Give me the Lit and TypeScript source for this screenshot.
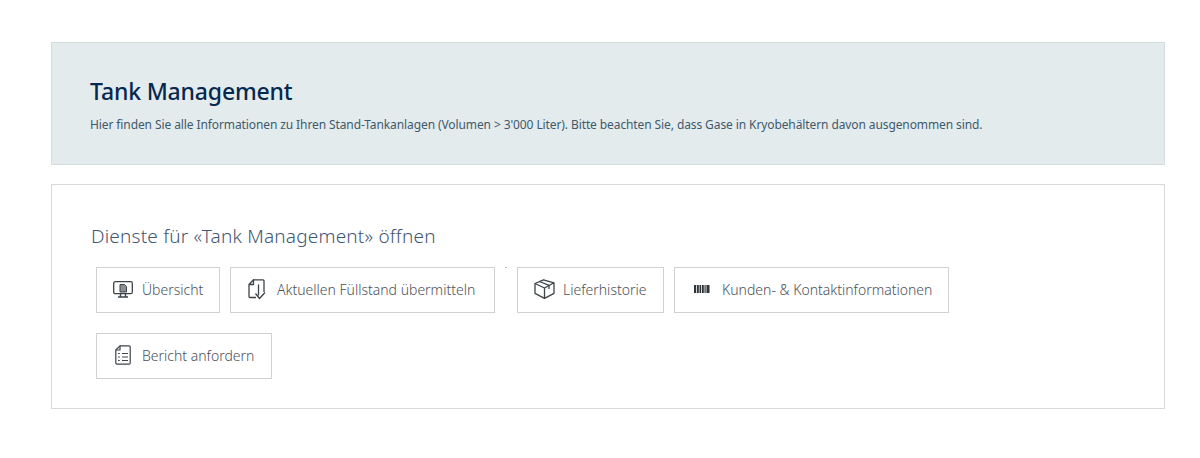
import { LitElement, html, css, svg } from "lit";
import { customElement } from "lit/decorators.js";

const icons: Record<string, unknown> = {
  monitor: svg`<svg class="ic" width="20" height="17" viewBox="0 0 20 17" fill="none" stroke="#3c4448" stroke-width="1.3">
    <rect x="0.7" y="0.7" width="18.6" height="12" rx="1.5"/>
    <path d="M7 11V3.500h4.500L13.500 5.500V11z" fill="#8a9094" stroke-width="1"/>
    <path d="M7.500 12.700v2.800M12.500 12.700v2.800M5 16h10" stroke-width="1.400"/></svg>`,
  upload: svg`<svg class="ic" width="20" height="21" viewBox="0 0 20 21" fill="none" stroke="#3c4448" stroke-width="1.300" stroke-linejoin="round">
    <path d="M5.500 0.800h9.500a1 1 0 0 1 1 1V13"/><path d="M8 18.500H2a1 1 0 0 1-1-1V5.500L5.500 0.800V5.500H1"/>
    <path d="M10.500 5.500V16.500M7.500 14.500l4 5 5.500-6"/></svg>`,
  box: svg`<svg class="ic" width="21" height="20" viewBox="0 0 21 20" fill="none" stroke="#3c4448" stroke-width="1.300" stroke-linejoin="round">
    <path d="M9.500 0.800l10.500 3v10.500l-9.500 5-9.500-5V4.500z"/><path d="M1 4.500l9.500 4.500 9.500-5.200M10.500 9V19.200"/><path d="M5.500 2.500l9.500 3.800v3.700"/></svg>`,
  barcode: svg`<svg class="ic" width="19" height="8" viewBox="0 0 19 8" fill="#2f3438">
    <path d="M0 0h2.200v8H0zM3 0h1.800v8H3zM5.500 0h1.500v8H5.500zM7.800 0h2v8h-2zM10.500 0h1.200v8h-1.200zM12.500 0h3v8h-3z"/></svg>`,
  report: svg`<svg class="ic" width="16" height="20" viewBox="0 0 16 20" fill="none" stroke="#3c4448" stroke-width="1.200" stroke-linejoin="round">
    <path d="M5 0.800h9a1.200 1.200 0 0 1 1.200 1.200v16a1.200 1.200 0 0 1-1.200 1.200H2A1.200 1.200 0 0 1 0.800 18V5z"/><path d="M5 0.800V5H0.800"/>
    <path d="M3 8.500h1.800M3 12h1.800M3 15.500h1.800M7 8.500h6M7 12h6M7 15.500h6"/></svg>`,
};

@customElement("app-root")
export class AppRoot extends LitElement {
  static styles = css`
    :host { display: block; font-family: "Noto Sans", "Open Sans", sans-serif; background: #fff; }
    .page { padding: 42px 35px 49px 51px; display: flex; flex-direction: column; gap: 19px; }
    .banner { background: #e4ebed; border: 1px solid #d5dde1; height: 123px; box-sizing: border-box; padding: 31px 38px 0; }
    h1 { margin: 0; color: #05294e; font-size: 23px; line-height: 34px; font-weight: 500; letter-spacing: -0.17px; }
    .banner p { margin: 8px 0 0; color: #3f5a6c; font-size: 12px; line-height: 18px; letter-spacing: -0.1px; }
    .card { border: 1px solid #d7d9da; height: 225px; box-sizing: border-box; padding: 37px 39px 0; }
    h2 { margin: 0; color: #3f5674; font-size: 19px; font-weight: 300; line-height: 28px; letter-spacing: 0.2px; }
    .btns { display: flex; flex-wrap: wrap; gap: 20px 10px; margin: 17px 0 0 5px; }
    .btn { height: 46px; box-sizing: border-box; padding-bottom: 2px; border: 1px solid #cfd1d2; background: #fff; display: flex; align-items: center; color: #4b5157; font-size: 14px; font-weight: 300; }
    .slot { width: 24px; margin-right: 7px; display: flex; justify-content: center; flex: none; }
    .ic { display: block; }
    .dot { width: 2px; height: 1px; background: #b8bcbe; }
  `;

  private btn(icon: string, label: string, w: number, pad: number) {
    return html`<div class="btn" style="width:${w}px;padding-left:${pad}px"><span class="slot">${icons[icon]}</span>${label}</div>`;
  }

  render() {
    return html`<div class="page">
      <section class="banner">
        <h1>Tank Management</h1>
        <p>Hier finden Sie alle Informationen zu Ihren Stand-Tankanlagen (Volumen &gt; 3'000 Liter). Bitte beachten Sie, dass Gase in Kryobehältern davon ausgenommen sind.</p>
      </section>
      <section class="card">
        <h2>Dienste für «Tank Management» öffnen</h2>
        <div class="btns">
          ${this.btn("monitor", "Übersicht", 124, 14)}
          ${this.btn("upload", "Aktuellen Füllstand übermitteln", 265, 15)}
          <div class="dot"></div>
          ${this.btn("box", "Lieferhistorie", 147, 14)}
          ${this.btn("barcode", "Kunden- & Kontaktinformationen", 275, 16)}
          ${this.btn("report", "Bericht anfordern", 176, 14)}
        </div>
      </section>
    </div>`;
  }
}
